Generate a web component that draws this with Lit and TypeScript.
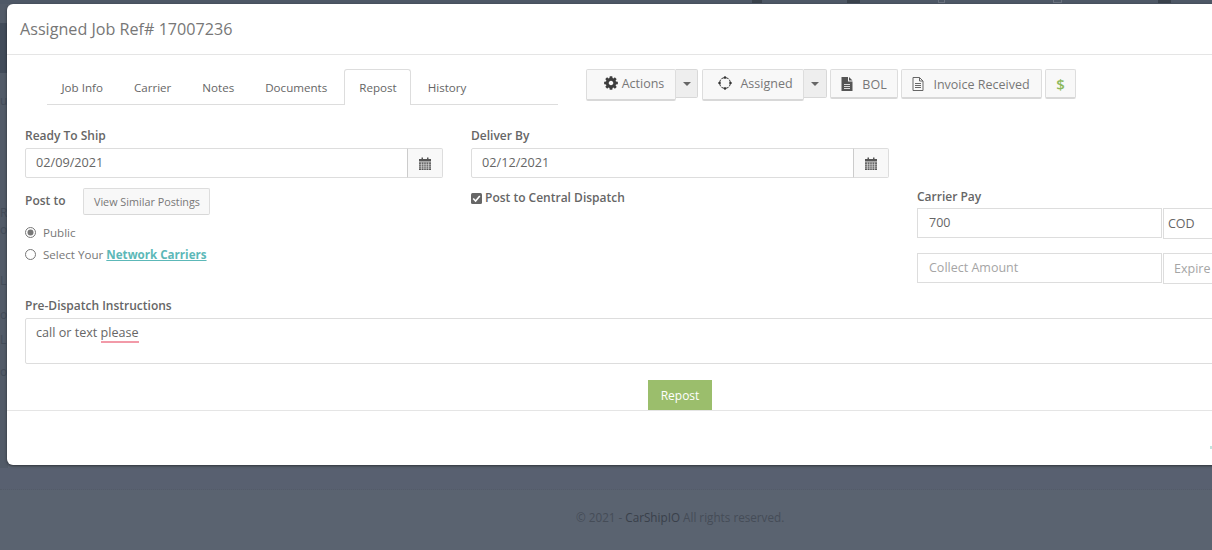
import { LitElement, html, css, svg } from "lit";
import { customElement } from "lit/decorators.js";

const gear = svg`<path d="M1152 896q0-106-75-181t-181-75-181 75-75 181 75 181 181 75 181-75 75-181zm512-109v222q0 12-8 23t-20 13l-185 28q-19 54-39 91 35 50 107 138 10 12 10 25t-9 23q-27 37-99 108t-94 71q-12 0-26-9l-138-108q-44 23-91 38-16 136-29 186-7 28-36 28h-222q-14 0-24.5-8.5t-11.5-21.5l-28-184q-49-16-90-37l-141 107q-10 9-25 9-14 0-25-11-126-114-165-168-7-10-7-23 0-12 8-23 15-21 51-66.5t54-70.5q-27-50-41-99l-183-27q-13-2-21-12.5t-8-23.5v-222q0-12 8-23t19-13l186-28q14-46 39-92-40-57-107-138-10-12-10-24 0-10 9-23 26-36 98.5-107.5t94.5-71.5q13 0 26 10l138 107q44-23 91-38 16-136 29-186 7-28 36-28h222q14 0 24.5 8.5t11.5 21.5l28 184q49 16 90 37l142-107q9-9 24-9 13 0 25 10 129 119 165 170 7 8 7 22 0 12-8 23-15 21-51 66.5t-54 70.5q26 50 41 98l183 28q13 2 21 12.5t8 23.5z"/>`;

const icons = {
  gear: html`<svg class="ic" width="16" height="16" viewBox="0 0 1792 1792" fill="#3d3d3d">${gear}</svg>`,
  spin: html`<svg class="ic" width="14" height="14" viewBox="0 0 14 14" fill="none" stroke="#333" stroke-width="1">
    <circle cx="7" cy="7" r="5.4"/>
    <g fill="#333" stroke="none"><rect x="6" y="0.4" width="2" height="2.2"/><rect x="6" y="11.4" width="2" height="2.2"/><rect x="0.4" y="6" width="2.2" height="2"/><rect x="11.4" y="6" width="2.2" height="2"/></g>
    <g stroke="#f8f8f8" stroke-width="1.1"><path d="M2.6 3.2L3.8 4.2M11.4 3.2L10.2 4.2M2.6 10.8L3.8 9.8M11.4 10.8L10.2 9.8"/></g>
  </svg>`,
  fileSolid: html`<svg class="ic" width="12" height="14" viewBox="0 0 12 14">
    <path fill="#555" d="M0.5 0H7V4.5H11.5V14H0.5z"/><path fill="#555" d="M8 0L11.5 3.5H8z"/>
    <path stroke="#ddd" stroke-width="1" d="M3 7.5H9M3 9.5H9M3 11.5H9"/>
  </svg>`,
  fileLine: html`<svg class="ic" width="12" height="14" viewBox="0 0 12 14" fill="none" stroke="#666" stroke-width="1">
    <path d="M1 .5H7.5L11 4V13.5H1z"/><path d="M7.5 .5V4H11"/><path d="M3 6.5H9M3 8.5H9M3 10.5H9"/>
  </svg>`,
  cal: html`<svg class="ic" width="12" height="13" viewBox="0 0 12 13">
    <path fill="#555" d="M0 2H2.5V.5H4V2H8V.5H9.5V2H12V4.5H0z"/>
    <path fill="#555" d="M0 5.3H12V13H0z"/>
    <path stroke="#eee" stroke-width=".6" d="M0 7.3H12M0 9.2H12M0 11.1H12M2.4 5.3V13M4.8 5.3V13M7.2 5.3V13M9.6 5.3V13"/>
  </svg>`,
};

@customElement("app-root")
export class AppRoot extends LitElement {
  static styles = css`
    :host {
      display: block; position: relative; width: 1212px; height: 550px; overflow: hidden;
      background: #5a6370; font-family: "Open Sans", "Noto Sans", sans-serif; font-size: 12px; color: #666;
    }
    * { box-sizing: border-box; }

    .leftband { position: absolute; left: 0; top: 0; width: 8px; height: 470px; background: #525b68; }
    .leftblock { position: absolute; left: 0; top: 23px; width: 8px; height: 50px; background: #414b59; }
    .ghost { position: absolute; left: 0; color: #434c58; font-size: 12px; line-height: 14px; }
    .ghost.g1 { top: 94px; } .ghost.g2 { top: 206px; } .ghost.g3 { top: 223px; }
    .ghost.g4 { top: 274px; } .ghost.g5 { top: 308px; } .ghost.g6 { top: 333px; } .ghost.g7 { top: 365px; }
    .topmarks { position: absolute; top: 0; left: 0; right: 0; height: 4px; background: #4e5866; }
    .mark { position: absolute; top: 0; height: 3px; background: #3a424c; }
    .mark.o { background: none; border: 1px solid #6b7380; border-top: 0; }
    .smear { position: absolute; left: 0; right: 0; top: 468px; height: 22px;
      border-bottom: 1px dotted #535b68; background: #586070; }
    .speck { position: absolute; left: 1210px; top: 446px; width: 2px; height: 3px; background: #c3e4de; z-index: 2; }

    .modal {
      position: relative; width: 1346px; height: 461px; margin: 4px 0 0 7px; background: #fff;
      border-radius: 6px; box-shadow: 0 1px 3px rgba(0,0,0,.5);
      display: flex; flex-direction: column;
    }
    .head { height: 51px; padding-left: 13px; border-bottom: 1px solid #e5e5e5; display: flex; align-items: center; }
    .head h4 { margin: 0; font-size: 16.15px; font-weight: 400; color: #777; line-height: 50px; }

    .toolbar { display: flex; align-items: flex-start; padding: 14px 0 0 40px; height: 73px; }
    .tabs { width: 511px; height: 36px; border-bottom: 1px solid #ddd; display: flex; }
    .tab { padding: 0 14px; height: 35px; line-height: 38px; color: #666; font-size: 11.6px; white-space: nowrap; margin-right: 3px; }
    .tab:first-child { padding-left: 14.5px; }
    .tab.on { background: #fff; border: 1px solid #ddd; border-bottom: 0; height: 36px; padding: 0 13px 0 14px; line-height: 36px; border-radius: 3px 3px 0 0; }
    .actions { display: flex; align-items: flex-start; margin-left: 28px; }
    .btn {
      display: flex; align-items: center; justify-content: center; background: #f8f8f8; border: 1px solid #ddd;
      border-bottom: 2px solid #d8d8d8; border-radius: 2px; color: #777; font-size: 12.5px; height: 30px; white-space: nowrap;
    }
    .btn .ic { flex: none; }
    .big { height: 32px; padding-bottom: 3px; }
    .caret { width: 22px; height: 29px; background: #eee; border: 1px solid #d8d8d8; border-left: 0; display: flex; align-items: center; justify-content: center; border-radius: 0 2px 2px 0; }
    .caret i { width: 0; height: 0; border: 4px solid transparent; border-top-color: #666; border-bottom: 0; }
    .a1 { width: 90px; gap: 3px; padding-left: 5px; } .a2 { width: 102px; gap: 8px; margin-left: 4px; padding-left: 5px; }
    .caret.c2 { width: 23px; }
    .a3 { width: 68px; gap: 9px; margin-left: 3px; padding-top: 1px; } .a4 { width: 141px; gap: 9px; margin-left: 3px; padding: 1px 1px 0 0; }
    .a5 { width: 31px; margin-left: 3px; color: #8cb85c; font-size: 15px; font-weight: 600; }

    .grid { display: grid; grid-template-columns: 418px 418px 1fr; column-gap: 28px; padding: 0 18px; height: 170px; }
    .label { display: block; font-weight: 600; color: #666; font-size: 12px; line-height: 16px; }
    .group { display: flex; margin-top: 4px; height: 30px; }
    .input { flex: 1; border: 1px solid #ddd; border-radius: 2px 0 0 2px; height: 30px; padding-left: 10px; line-height: 27px; font-size: 12.7px; color: #666; }
    .addon { width: 36px; height: 30px; border: 1px solid #ddd; border-left: 1px solid #ccc; border-radius: 0 2px 2px 0; background: #f8f8f8; display: flex; align-items: center; justify-content: center; margin-left: -1px; }

    .postrow { display: flex; align-items: center; margin-top: 9px; height: 28px; }
    .simbtn { margin-left: 18px; width: 127px; height: 27px; font-size: 10.8px; color: #777; border-bottom-width: 1px; }
    .radio { display: flex; align-items: center; gap: 7px; height: 22px; color: #777; font-size: 11.6px; }
    .radio svg { flex: none; }
    .radios { margin-top: 6px; }
    a { color: #5cb8b8; font-weight: 700; text-decoration: underline; }
    .check { display: flex; align-items: center; gap: 3px; margin-top: 12px; font-weight: 600; font-size: 12px; line-height: 16px; color: #666; }
    .pay { padding-top: 61px; }
    .payrow { display: flex; height: 30px; margin-top: 3px; }
    .payrow + .payrow { margin-top: 15px; }
    .f1 { width: 245px; height: 30px; border: 1px solid #ddd; padding-left: 11px; line-height: 27px; font-size: 12.5px; color: #666; }
    .f2 { width: 120px; height: 31px; border: 1px solid #ddd; border-right: 0; margin-left: 1px; padding-left: 4px; line-height: 29px; color: #666; font-size: 12.5px; }
    .ph { color: #a5a5a5; }
    .f2.ph { padding-left: 10px; }

    .instr { padding: 0 18px; }
    .ta { height: 46px; margin-top: 4px; border: 1px solid #ddd; border-radius: 2px; padding: 6px 10px; font-size: 12.6px; line-height: 16px; color: #666; }
    .sp { border-bottom: 2px solid #f29aa8; }
    .go { display: flex; justify-content: center; margin-top: 16px; }
    .repost { width: 64px; height: 30px; background: #9bbe6c; color: #fff; font-size: 12px; display: flex; align-items: center; justify-content: center; }
    .foot { border-top: 1px solid #e5e5e5; flex: 1; }

    .copy { margin: 45px 0 0 576px; font-size: 11.7px; line-height: 14px; color: #454c57; white-space: nowrap; position: relative; }
    .copy b { font-weight: 400; color: #39404a; }
  `;

  render() {
    return html`
      <div class="leftband"></div><div class="leftblock"></div>
      <div class="ghost g1">u</div><div class="ghost g2">R</div><div class="ghost g3">o</div>
      <div class="ghost g4">L</div><div class="ghost g5">o</div><div class="ghost g6">L</div><div class="ghost g7">o</div>
      <div class="topmarks">
        <span class="mark" style="left:752px;width:10px"></span>
        <span class="mark" style="left:847px;width:13px"></span>
        <span class="mark o" style="left:938px;width:7px"></span>
        <span class="mark o" style="left:1053px;width:9px"></span>
        <span class="mark" style="left:1158px;width:13px"></span>
      </div>
      <div class="smear"></div>
      <div class="speck"></div>

      <div class="modal">
        <div class="head"><h4>Assigned Job Ref# 17007236</h4></div>
        <div class="toolbar">
          <div class="tabs">
            <span class="tab">Job Info</span><span class="tab">Carrier</span><span class="tab">Notes</span>
            <span class="tab">Documents</span><span class="tab on">Repost</span><span class="tab">History</span>
          </div>
          <div class="actions">
            <div class="btn big a1">${icons.gear}<span>Actions</span></div><div class="caret"><i></i></div>
            <div class="btn big a2">${icons.spin}<span>Assigned</span></div><div class="caret c2"><i></i></div>
            <div class="btn a3">${icons.fileSolid}<span>BOL</span></div>
            <div class="btn a4">${icons.fileLine}<span>Invoice Received</span></div>
            <div class="btn a5">$</div>
          </div>
        </div>

        <div class="grid">
          <div>
            <span class="label">Ready To Ship</span>
            <div class="group"><div class="input">02/09/2021</div><div class="addon">${icons.cal}</div></div>
            <div class="postrow"><span class="label">Post to</span><div class="btn simbtn">View Similar Postings</div></div>
            <div class="radios">
              <div class="radio">
                <svg width="11" height="11" viewBox="0 0 11 11"><circle cx="5.5" cy="5.5" r="5" fill="#fff" stroke="#777"/><circle cx="5.5" cy="5.5" r="3" fill="#777"/></svg>
                <span>Public</span>
              </div>
              <div class="radio">
                <svg width="11" height="11" viewBox="0 0 11 11"><circle cx="5.5" cy="5.5" r="5" fill="#fff" stroke="#777"/></svg>
                <span>Select Your <a>Network Carriers</a></span>
              </div>
            </div>
          </div>
          <div>
            <span class="label">Deliver By</span>
            <div class="group"><div class="input">02/12/2021</div><div class="addon">${icons.cal}</div></div>
            <div class="check">
              <svg width="11" height="11" viewBox="0 0 11 11"><rect width="11" height="11" rx="1.5" fill="#666"/><path d="M2.2 5.5L4.6 8L8.8 3" fill="none" stroke="#fff" stroke-width="1.6"/></svg>
              <span>Post to Central Dispatch</span>
            </div>
          </div>
          <div class="pay">
            <span class="label">Carrier Pay</span>
            <div class="payrow"><div class="f1">700</div><div class="f2">COD</div></div>
            <div class="payrow"><div class="f1 ph">Collect Amount</div><div class="f2 ph">Expire</div></div>
          </div>
        </div>

        <div class="instr">
          <span class="label">Pre-Dispatch Instructions</span>
          <div class="ta">call or text <span class="sp">please</span></div>
          <div class="go"><div class="repost">Repost</div></div>
        </div>
        <div class="foot"></div>
      </div>
      <div class="copy">© 2021 - <b>CarShipIO</b> All rights reserved.</div>
    `;
  }
}
